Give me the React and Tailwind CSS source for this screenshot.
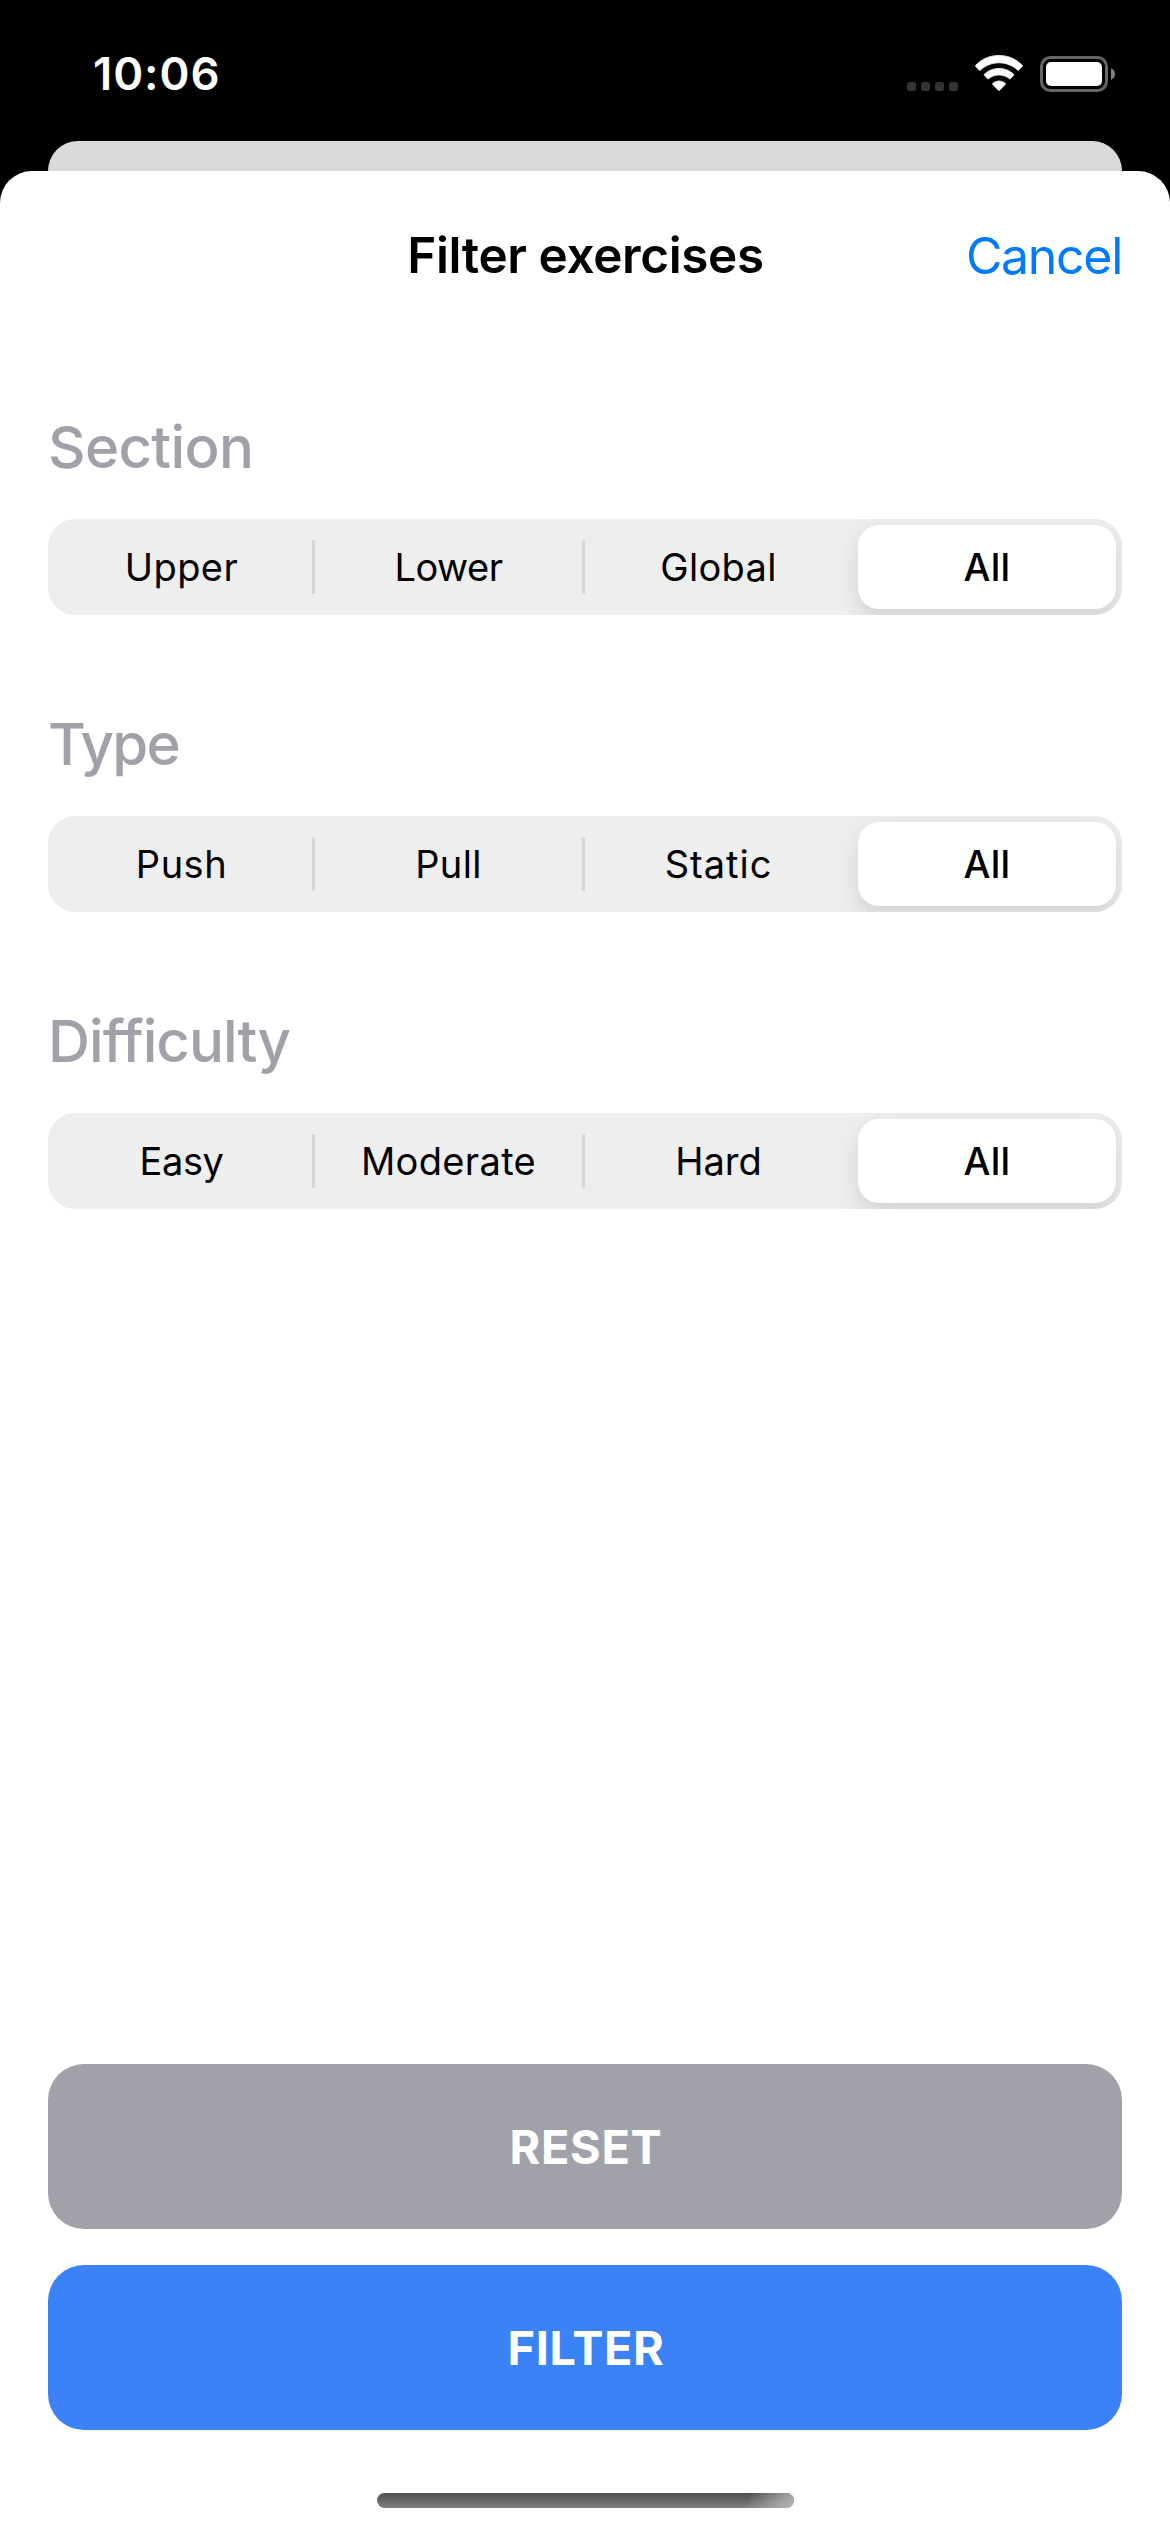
import React, { useState } from "react";

const FILTERS = [
  {
    title: "Section",
    titleClass: "tracking-[-0.68px]",
    options: [
      { label: "Upper", className: "tracking-[0.4px]" },
      { label: "Lower", className: "tracking-[-0.45px]" },
      { label: "Global", className: "tracking-[0.34px]" },
      { label: "All", className: "tracking-[0.24px]" },
    ],
  },
  {
    title: "Type",
    titleClass: "tracking-[-1.8px]",
    options: [
      { label: "Push", className: "tracking-[0.5px]" },
      { label: "Pull", className: "tracking-[0.4px]" },
      { label: "Static", className: "tracking-[1px]" },
      { label: "All", className: "tracking-[0.24px]" },
    ],
  },
  {
    title: "Difficulty",
    titleClass: "tracking-[-1px]",
    options: [
      { label: "Easy", className: "tracking-[-0.4px]" },
      { label: "Moderate", className: "tracking-[0.35px]" },
      { label: "Hard", className: "" },
      { label: "All", className: "tracking-[0.24px]" },
    ],
  },
];

function CellularDots() {
  return (
    <div className="mt-[27px] flex gap-[5px]">
      {[0, 1, 2, 3].map((i) => (
        <span key={i} className="size-[9px] rounded-[2.5px] bg-[#333333]" />
      ))}
    </div>
  );
}

function WifiIcon() {
  return (
    <svg className="ml-[17px] h-9 w-12" viewBox="0 0 48 36" fill="#fff" stroke="#fff" strokeWidth="0.8" strokeLinejoin="round">
      <path d="M24 .4C33.2 .4 41.2 4 47.5 10.5c.2.2.2.4 0 .6l-3.8 4.1c-.3.3-.5.3-.8 0C37.600 10.500 31.2 7.800 24 7.800S10.400 10.500 5.100 15.200c-.3.3-.5.3-.8 0L.5 11.100c-.2-.2-.2-.4 0-.6C6.800 4 14.800 .4 24 .4Z" />
      <path d="M24 13.400c5.700 0 10.900 2.300 14.800 6 .2.2.2.4 0 .6l-3.500 3.900c-.2.200-.4.200-.6 0C31.800 21.400 28.100 19.900 24 19.900s-7.800 1.500-10.700 4c-.2.200-.4.200-.6 0L9.200 20c-.2-.2-.2-.4 0-.6 3.900-3.700 9.100-6 14.800-6Z" />
      <path d="M24 26c2.500 0 4.700 1 6.400 2.600.2.200.2.400 0 .6l-6 6.200c-.2.200-.6.200-.8 0l-6-6.200c-.2-.2-.2-.4 0-.6C19.300 27 21.500 26 24 26Z" />
    </svg>
  );
}

function BatteryIcon() {
  return (
    <svg className="ml-[17px] mt-px h-9 w-[75px]" viewBox="0 0 75 36" fill="none">
      <rect x="1.500" y="1.500" width="65" height="33" rx="9" stroke="#666666" strokeWidth="3" />
      <rect x="6" y="6" width="56" height="24" rx="5" fill="#fff" />
      <path d="M71 12.200c2.500 1 4 3.200 4 5.800s-1.500 4.800-4 5.800V12.200Z" fill="#808080" />
    </svg>
  );
}

function StatusBar() {
  return (
    <div className="flex h-[141px] justify-between pl-[93px] pr-[55px]">
      <span className="mt-[44px] text-[45.5px] font-semibold leading-[60px] tracking-[0.93px] text-white">10:06</span>
      <div className="mt-[55px] flex items-start">
        <CellularDots />
        <WifiIcon />
        <BatteryIcon />
      </div>
    </div>
  );
}

function SegmentedControl({ options }) {
  const [active, setActive] = useState(3);
  return (
    <div className="mt-[42px] flex h-24 overflow-hidden rounded-[27px] bg-[#eeeeee] py-1.5 pr-1.5">
      {options.map(({ label, className }, i) => (
        <React.Fragment key={label}>
          {i > 0 && (
            <span
              className={
                i === 3
                  ? "w-1.5 shrink-0"
                  : "my-[15px] w-[3px] shrink-0 rounded-full bg-[#d5d5d6]"
              }
            />
          )}
          <button
            onClick={() => setActive(i)}
            className={`flex shrink-0 items-center justify-center text-[38px] leading-none text-black ${className} ${
              i === 0 ? "w-[264px] pl-[3px]" : i === 3 ? "w-[258px]" : "w-[267px]"
            } ${
              active === i
                ? "rounded-[21px] bg-white font-medium shadow-[0_9px_24px_rgba(0,0,0,0.11),0_9px_3px_rgba(0,0,0,0.015)]"
                : "font-normal"
            }`}
          >
            {label}
          </button>
        </React.Fragment>
      ))}
    </div>
  );
}

function FilterGroup({ title, titleClass, options }) {
  return (
    <section>
      <h2 className={`h-[60px] text-[58.2px] font-medium leading-[60px] text-[#a1a1aa] ${titleClass}`}>{title}</h2>
      <SegmentedControl options={options} />
    </section>
  );
}

export default function App() {
  return (
    <div className="flex h-[2532px] w-[1170px] flex-col overflow-hidden bg-black font-['Inter',sans-serif] antialiased">
      <StatusBar />
      <div className="mx-12 h-[30px] shrink-0 rounded-t-[30px] bg-[#dadada]" />
      <main className="flex grow flex-col rounded-t-[32px] bg-white px-12">
        <header className="grid h-[168px] grid-cols-[1fr_auto_1fr] items-center">
          <h1 className="col-start-2 pl-px text-[49.5px] font-semibold leading-[60px] tracking-[-0.39px] text-black">Filter exercises</h1>
          <button className="mt-0.5 justify-self-end text-[50px] leading-[60px] tracking-[-1.31px] text-[#007aff]">Cancel</button>
        </header>

        <div className="mt-[78px] flex flex-col gap-[99px]">
          {FILTERS.map((f) => (
            <FilterGroup key={f.title} {...f} />
          ))}
        </div>

        <div className="mt-auto flex flex-col gap-9 text-[46.8px] font-bold text-white">
          <button className="h-[165px] rounded-[36px] bg-[#a1a1aa] pl-0.5 pt-px tracking-[0.69px]">RESET</button>
          <button className="h-[165px] rounded-[36px] bg-[#3b82f6] pl-0.5 pt-px tracking-[0.6px]">FILTER</button>
        </div>

        <div className="mb-6 mt-[63px] h-[15px] w-[417px] self-center overflow-hidden rounded-full bg-gradient-to-b from-[#505050] to-[#808080]">
          <div className="ml-auto h-full w-[60px] bg-[linear-gradient(120deg,transparent_25%,#b8b8b8_100%)]" />
        </div>
      </main>
    </div>
  );
}
